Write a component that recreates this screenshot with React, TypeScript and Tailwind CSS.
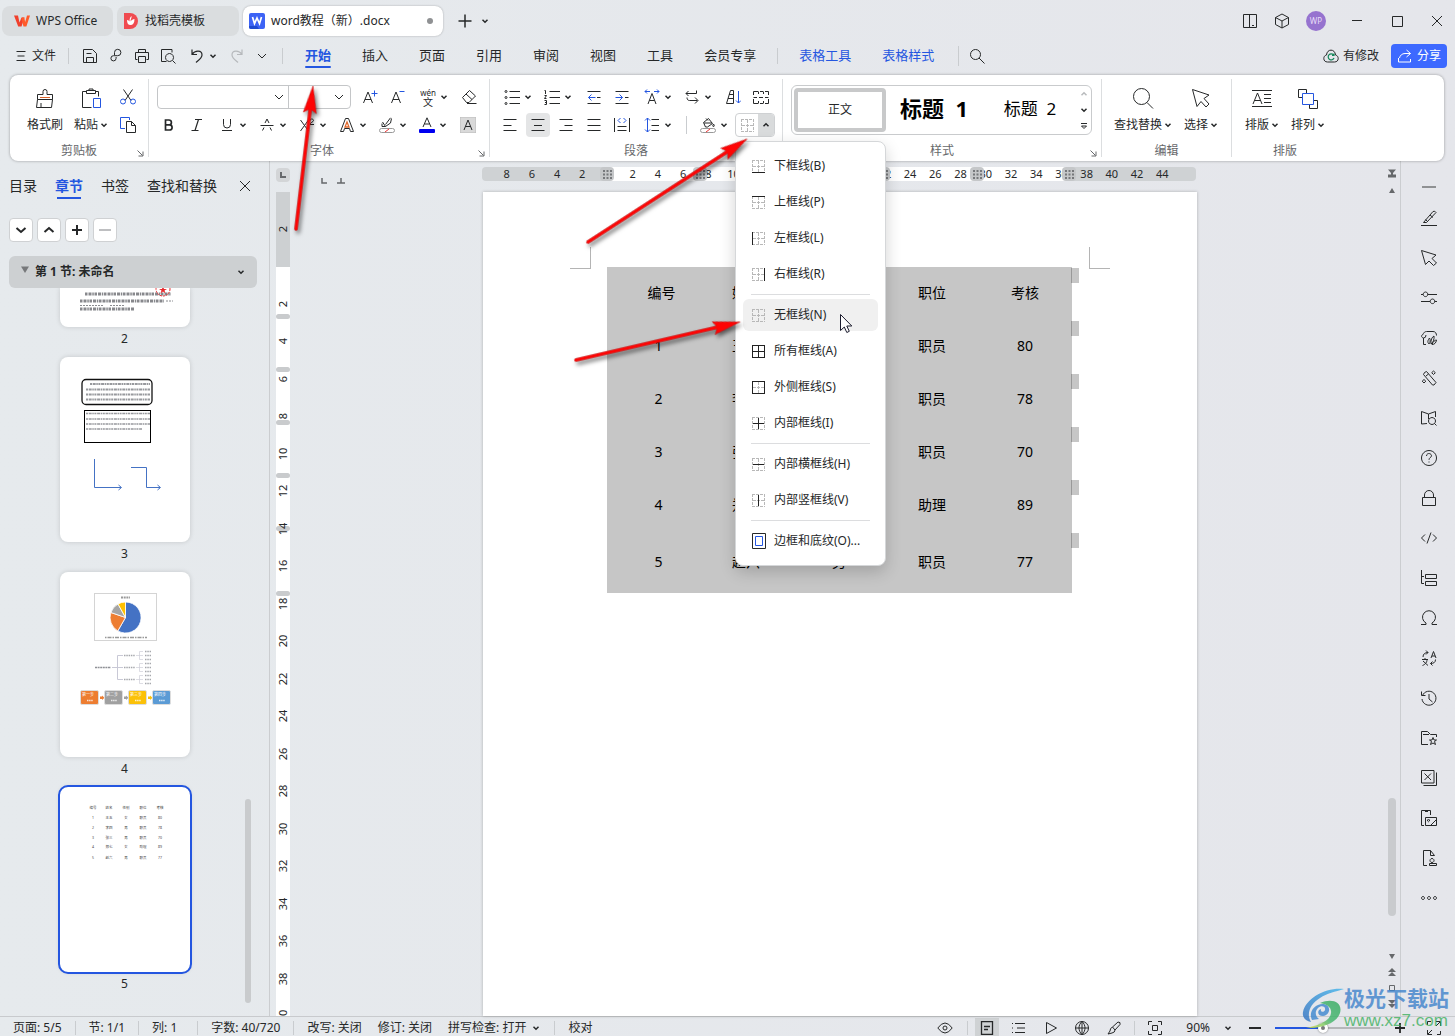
import { Fragment, type ReactNode } from 'react';
import clsx from 'clsx';

const FONT = "font-['Noto_Sans','Noto_Sans_CJK_SC',sans-serif]";

type IconProps = { w?: number; h?: number; className?: string; children: ReactNode };

function Icon({ w = 16, h = 16, className, children }: IconProps) {
  return (
    <svg
      width={w}
      height={h}
      viewBox={`0 0 ${w} ${h}`}
      fill="none"
      stroke="currentColor"
      className={clsx('shrink-0', className)}
      aria-hidden="true"
    >
      {children}
    </svg>
  );
}

const Caret = ({ up = false }: { up?: boolean }) => (
  <Icon w={8} h={8}>
    <path d={up ? 'M1.5 5.2 4 2.8l2.5 2.4' : 'M1.5 2.8 4 5.2l2.5-2.4'} strokeWidth="1.5" />
  </Icon>
);

const Chevron = ({ className }: { className?: string }) => (
  <Icon w={10} h={8} className={className}>
    <path d="M1 2l4 4 4-4" />
  </Icon>
);

const blue = '#2456e0';

/* ---------- 标题栏 ---------- */

function TitleBar() {
  return (
    <header className="flex h-10 items-end pb-1 pl-0.5 pr-2">
      <button className="flex h-[30px] w-[111px] items-center gap-1.5 rounded-lg bg-[#dadddf] pl-3">
        <Icon>
          <path d="M0 2.5h4l1.5 7 2-5h3l-3 9H4.2z" fill="#f0402c" stroke="none" />
          <path d="M8 4.5h2.2l1 4.5L13 2.5h3l-3.600 11H9.500L7.600 6z" fill="#ff5a2a" stroke="none" />
        </Icon>
        WPS Office
      </button>
      <button className="ml-1 flex h-[30px] w-[122px] items-center gap-1.5 rounded-lg bg-[#dadddf] pl-1.5">
        <Icon>
          <path d="M1 0h6a8 8 0 0 1 0 16H1z" fill="#f04b50" stroke="none" />
          <path d="M8.500 3c.5 2-1 3-1 5.500 1-1.500 2.500-2.500 4-2.500 0 4-1.500 6-4 6S4 10 4 7c1.500 0 2 .8 2.500 1.500C6.500 6 7 4 8.500 3z" fill="#fff" stroke="none" />
        </Icon>
        找稻壳模板
      </button>
      <button className="ml-1 flex h-[30px] w-[200px] items-center gap-1.5 rounded-lg bg-white pl-1.5 pr-2.5 shadow-[0_0_2px_rgba(0,0,0,0.3)]">
        <Icon>
          <rect width="16" height="16" rx="2" fill="#3d63f5" stroke="none" />
          <path d="M0 13h8l2 3H2a2 2 0 0 1-2-2z" fill="#1f49cf" stroke="none" />
          <path d="M3.500 4l2 6.500L8 5l2.500 5.500 2-6.500" stroke="#fff" strokeWidth="1.700" />
        </Icon>
        <span className="whitespace-nowrap">word教程（新）.docx</span>
        <span className="ml-auto h-1.5 w-1.5 rounded-full bg-[#8f9193]" />
      </button>
      <button aria-label="新建" className="ml-3.5 flex h-[30px] items-center">
        <Icon><path d="M8 1.500v13M1.500 8h13" strokeWidth="1.500" /></Icon>
      </button>
      <button aria-label="标签列表" className="ml-2 flex h-[30px] items-center"><Caret /></button>

      <div className="ml-auto flex h-[30px] items-center">
        <button aria-label="分屏" className="mr-4">
          <Icon><path d="M1.500 1.500h13v13h-13zM7.500 1.500v13M10 12.500h2" /></Icon>
        </button>
        <button aria-label="应用" className="mr-4">
          <Icon>
            <path d="M8 1l6.500 3.500v7L8 15l-6.500-3.500v-7zM1.500 4.500 8 8l6.500-3.500M8 8v7" />
          </Icon>
        </button>
        <button className="mr-[26px] h-5 w-5 rounded-full bg-[#9673cf] text-[8px] leading-5 text-[#e6dcf7]">WP</button>
        <button aria-label="最小化" className="mr-[30px]">
          <Icon w={10} h={10}><path d="M0 4.500h10" /></Icon>
        </button>
        <button aria-label="最大化" className="mr-7">
          <Icon w={11} h={11}><path d="M.5.5h10v10H.5z" /></Icon>
        </button>
        <button aria-label="关闭" className="mr-1">
          <Icon w={12} h={12}><path d="M1 1l10 10M11 1L1 11" /></Icon>
        </button>
      </div>
    </header>
  );
}

/* ---------- 菜单栏 ---------- */

const quickTools = [
  { label: '保存', d: 'M1.500 1.500h9l4 4v9h-13zM4.500 14v-4.500h7V14M4.500 5.500h5' },
  { label: '输出', d: 'M6.500 7V4.500a3.200 3.200 0 1 1 3.200 3.200H5.500a2.600 2.600 0 1 0 2.600 2.600V9' },
  { label: '打印', d: 'M4.500 4.500v-3h7v3M3.500 11.500h-2v-7h13v7h-2M4.500 8.500h7v6h-7z' },
  { label: '预览', d: 'M6.500 13.500h-5v-12h10.500v3M9.500 5.500a4 4 0 1 0 .01 0M12.500 12.500l3 3' },
];

const menuTabs = ['插入', '页面', '引用', '审阅', '视图', '工具', '会员专享'];

const Divider = ({ className }: { className?: string }) => (
  <span className={clsx('w-px bg-[#c9cccf]', className)} />
);

function MenuBar() {
  return (
    <nav className="flex h-[35px] items-center pb-1 pl-4 pr-2">
      <button className="flex items-center gap-1.5">
        <Icon w={10} h={12}><path d="M.5 1.500h9M1.500 6h7M.5 10.500h9" /></Icon>
        文件
      </button>
      <Divider className="ml-3 mr-2 h-4" />
      {quickTools.map(({ label, d }) => (
        <button key={label} aria-label={label} className="flex w-[26px] justify-center">
          <Icon><path d={d} /></Icon>
        </button>
      ))}
      <button aria-label="撤销" className="ml-2 flex items-center gap-1">
        <Icon><path d="M3 1.500v5h5M3 6.500C6 2 13 2 13 7c0 3-3 5-6 7.500" strokeWidth="1.200" /></Icon>
        <Caret />
      </button>
      <button aria-label="重做" className="ml-3 text-[#b6b9bc]">
        <Icon><path d="M13 1.500v5H8M13 6.500C10 2 3 2 3 7c0 3 3 5 6 7.500" strokeWidth="1.200" /></Icon>
      </button>
      <button aria-label="更多" className="ml-3"><Chevron /></button>
      <Divider className="ml-[15px] mr-[22px] h-4" />

      <div className="flex gap-[31px] text-[13px]">
        <a href="#start" className="relative font-bold text-[#2456e0]">
          开始
          <span className="absolute inset-x-0 -bottom-1 h-0.5 rounded bg-[#2456e0]" />
        </a>
        {menuTabs.map((tab) => (
          <a key={tab} href="#tab">{tab}</a>
        ))}
      </div>
      <Divider className="mx-[21px] h-4" />
      <div className="flex gap-[31px] text-[13px] text-[#2456e0]">
        <a href="#table-tools">表格工具</a>
        <a href="#table-style">表格样式</a>
      </div>
      <Divider className="ml-6 mr-[10px] h-5" />
      <button aria-label="搜索">
        <Icon><circle cx="6.500" cy="6.500" r="5" /><path d="M10 10l5.500 5.500" /></Icon>
      </button>

      <button className="ml-auto flex items-center gap-1">
        <Icon>
          <path d="M4.500 14C-.5 14 0 7.500 3.500 7 4 .5 12 .5 12.500 7c3.500.5 4 7-1 7z" />
          <path d="M10.500 7a3 3 0 1 0 .5 3M11 5.500v2H9" stroke="#14875a" strokeWidth="1.200" />
        </Icon>
        有修改
      </button>
      <button className="ml-3 flex h-6 w-14 items-center justify-center gap-1 rounded bg-[#3d69ff] text-white">
        <Icon>
          <path d="M9.500 2l4 3.500-4 3.500M13.500 5.500H8c-3 0-5 2-5.500 4.500M1.500 10v4h12v-3" />
        </Icon>
        分享
      </button>
    </nav>
  );
}

/* ---------- 功能区 ---------- */

function Group({ label, className, launcher, children }: {
  label: string;
  className?: string;
  launcher?: boolean;
  children: ReactNode;
}) {
  return (
    <section className={clsx('relative flex shrink-0 flex-col pt-2', className)}>
      <div className="flex h-14 flex-col">{children}</div>
      <div className="h-[22px] text-center leading-6 text-[#66686b]">{label}</div>
      {launcher && (
        <button aria-label={`${label}设置`} className="absolute bottom-1 right-1 text-[#66686b]">
          <Icon w={7} h={7}><path d="M.5.5l5 5M6 1.500v4.500H1.500" /></Icon>
        </button>
      )}
    </section>
  );
}

const GroupLine = () => <span className="my-1 w-px bg-[#dcdee0]" />;

const Tool = ({ label, children, drop, active }: {
  label: string;
  children: ReactNode;
  drop?: boolean;
  active?: boolean;
}) =>
  drop ? (
    <button aria-label={label} className="flex h-7 w-10 shrink-0 items-center gap-1 pl-2">
      {children}
      <Caret />
    </button>
  ) : (
    <button aria-label={label} className="flex h-7 w-7 shrink-0 items-center justify-center">
      <span className={clsx('flex h-6 w-6 items-center justify-center rounded', active && 'bg-[#e4e5e6]')}>
        {children}
      </span>
    </button>
  );

const BigTool = ({ label, drop, className, children }: {
  label: string;
  drop?: boolean;
  className: string;
  children: ReactNode;
}) => (
  <button className={clsx('flex h-14 flex-col items-center pt-1', className)}>
    {children}
    <span className="flex h-7 items-center gap-0.5 whitespace-nowrap">
      {label}
      {drop && <Caret />}
    </span>
  </button>
);

function ClipboardGroup() {
  return (
    <Group label="剪贴板" launcher className="w-[138px]">
      <div className="flex pl-3">
        <BigTool label="格式刷" className="w-[46px]">
          <Icon w={24} h={24}>
            <path d="M4.500 7.500h5.500v-3a2 2 0 0 1 4 0v3h5.500v5h-15zM4.500 12.500l-1 8h15l1-8M8 20v-4" />
            <path d="M7 10.500h10" stroke="#d9622b" />
          </Icon>
        </BigTool>
        <BigTool label="粘贴" drop className="w-[46px]">
          <Icon w={24} h={24}>
            <path d="M7 4.500H3.500v16h9M17 4.500h2.500v5M7.500 3.500h9v3h-9zM10 3.500V2h4v1.500" />
            <path d="M14.500 11.500h7v9h-7z" stroke={blue} />
          </Icon>
        </BigTool>
        <div className="flex flex-col">
          <Tool label="剪切">
            <Icon>
              <path d="M3.500.5l7.500 11M12.500.5L5 11.500" />
              <circle cx="3" cy="12.500" r="2.500" stroke={blue} />
              <circle cx="13" cy="12.500" r="2.500" stroke={blue} />
            </Icon>
          </Tool>
          <Tool label="复制">
            <Icon>
              <path d="M5 11.500H.5V.5h9V3" stroke={blue} />
              <path d="M6.500 4.500h5l4 4v7h-9zM11.500 4.500v4h4" />
            </Icon>
          </Tool>
        </div>
      </div>
    </Group>
  );
}

function FontGroup() {
  return (
    <Group label="字体" launcher className="w-[340px] pl-1.5">
      <div className="flex h-7 items-center">
        <div className="ml-0.5 mr-[5px] flex h-6 w-[194px] rounded border border-[#c4c6c8]">
          <label className="relative flex w-[131px] items-center border-r border-[#c4c6c8]">
            <select aria-label="字体名称" className="h-full w-full appearance-none bg-transparent"><option /></select>
            <Chevron className="absolute right-1" />
          </label>
          <label className="relative flex flex-1 items-center">
            <select aria-label="字号" className="h-full w-full appearance-none bg-transparent"><option /></select>
            <Chevron className="absolute right-1.5" />
          </label>
        </div>
        <Tool label="增大字号">
          <Icon>
            <path d="M1.500 14l4.500-11 4.500 11M3 10.500h6" />
            <path d="M9.500 4.500h6M12.500 1.500v6" stroke={blue} />
          </Icon>
        </Tool>
        <Tool label="减小字号">
          <Icon>
            <path d="M1.500 14l4.500-11 4.500 11M3 10.500h6" />
            <path d="M9.500 2.500h5" stroke={blue} />
          </Icon>
        </Tool>
        <Tool label="拼音指南" drop>
          <span className="flex w-4 flex-col items-center">
            <span className="text-[8px] leading-[9px]">wén</span>
            <span className="text-[10px] leading-[10px]">文</span>
          </span>
        </Tool>
        <span className="w-[3px]" />
        <Tool label="清除格式">
          <Icon><path d="M1.500 8.500l7-7 6 5.500-6.500 6.500h-2.500zM5 5l6 5.500M6 14.500h9.500" /></Icon>
        </Tool>
      </div>
      <div className="flex h-7 items-center">
        <Tool label="加粗"><Icon><path d="M4.500 3v10h4a2.500 2.500 0 0 0 0-5.200h-4 3.500a2.300 2.300 0 0 0 0-4.800z" strokeWidth="1.700" /></Icon></Tool>
        <Tool label="倾斜"><Icon><path d="M6 2.500h7M2.500 13.500h7M9.500 2.500l-3.500 11" strokeWidth="1.200" /></Icon></Tool>
        <Tool label="下划线" drop><Icon><path d="M4.500 2v5.500a3.500 3.500 0 0 0 7 0V2M3 13.500h10" /></Icon></Tool>
        <Tool label="删除线" drop><Icon><path d="M1.500 8.500h13M6 6l2-4 2 4M5 10.500l-1.500 3M11 10.500l1.500 3" /></Icon></Tool>
        <Tool label="上标" drop>
          <Icon><path d="M1.500 3l8 11M9.500 3l-8 11M11 3.500c0-2 3.500-2 3.500 0 0 1.500-3.500 2-3.500 4h4" /></Icon>
        </Tool>
        <Tool label="文字效果" drop>
          <Icon>
            <path d="M1.500 14.500l5-13h3l5 13h-3l-1-3h-5l-1 3z" />
            <path d="M6 10L8 5l2 5z" stroke="#e0682c" strokeWidth="1.300" />
          </Icon>
        </Tool>
        <Tool label="突出显示" drop>
          <Icon>
            <path d="M6.500 7.500L11.500.8M3.500 5l3 4.500 5-3.500 1-4.500M6.500 9.500H3v-3" />
            <rect x=".5" y="11.500" width="15" height="4" rx="2" stroke="#999" />
            <path d="M6 15l4-3" stroke="#e33" />
          </Icon>
        </Tool>
        <Tool label="字体颜色" drop>
          <Icon>
            <path d="M4 10L8 .8 12 10M5.500 7h5" />
            <rect y="12" width="16" height="4" rx="1" fill="#0000f0" stroke="none" />
          </Icon>
        </Tool>
        <span className="w-[3px]" />
        <Tool label="字符底纹">
          <Icon>
            <rect width="16" height="16" fill="#d9d9d9" stroke="#bbb" />
            <path d="M4 13L8 3l4 10M5.500 9.500h5" />
          </Icon>
        </Tool>
      </div>
    </Group>
  );
}

/* 边框图标：列出的边画实线，其余为虚线 */
const borderLines: Record<string, string> = {
  t: 'M0 .5h13',
  b: 'M0 12.500h13',
  l: 'M.5 0v13',
  r: 'M12.500 0v13',
  h: 'M1 6.500h11',
  v: 'M6.500 1v11',
};

function BorderIcon({ sides = '' }: { sides?: string }) {
  return (
    <Icon w={13} h={13}>
      {Object.entries(borderLines).map(([side, d]) =>
        sides.includes(side) ? null : <path key={side} d={d} stroke="#b8b8b8" strokeDasharray="3 1" />
      )}
      {Object.entries(borderLines).map(([side, d]) =>
        sides.includes(side) ? <path key={side} d={d} stroke="#222" /> : null
      )}
    </Icon>
  );
}

const borderMenu = [
  [
    { label: '下框线(B)', sides: 'b' },
    { label: '上框线(P)', sides: 't' },
    { label: '左框线(L)', sides: 'l' },
    { label: '右框线(R)', sides: 'r' },
  ],
  [
    { label: '无框线(N)', sides: '', active: true },
    { label: '所有框线(A)', sides: 'tblrhv' },
    { label: '外侧框线(S)', sides: 'tblr' },
    { label: '内部框线(I)', sides: 'hv' },
  ],
  [
    { label: '内部横框线(H)', sides: 'h' },
    { label: '内部竖框线(V)', sides: 'v' },
  ],
];

function BorderMenu() {
  return (
    <div className="absolute left-0 top-full z-30 mt-1 flex w-[151px] flex-col gap-1 rounded-lg border border-[#d5d7d9] bg-white px-[7px] pb-2 pt-2 shadow-[0_6px_16px_rgba(0,0,0,0.18)]">
      {borderMenu.map((section, i) => (
        <Fragment key={i}>
          {section.map(({ label, sides, active }: { label: string; sides: string; active?: boolean }) => (
            <button
              key={label}
              className={clsx('flex h-8 items-center gap-[9px] whitespace-nowrap rounded-md pl-[9px]', active && 'bg-[#f0f0f0]')}
            >
              <BorderIcon sides={sides} />
              {label}
            </button>
          ))}
          <hr className="mx-2 h-px border-0 bg-[#dcdddf]" />
        </Fragment>
      ))}
      <button className="flex h-8 items-center gap-2 whitespace-nowrap pl-[9px]">
        <Icon w={14} h={16}>
          <path d="M.5.5h13v15H.5z" />
          <path d="M3.500 3.500h7v9h-7z" stroke={blue} />
        </Icon>
        边框和底纹(O)...
      </button>
    </div>
  );
}

function ParagraphGroup() {
  return (
    <Group label="段落" className="w-[292px]">
      <div className="flex h-7 items-center pl-1.5">
        <Tool label="项目符号" drop>
          <Icon>
            <path d="M5.500 2.500H16M5.500 8.500H16M5.500 14.500H16" />
            <circle cx="2" cy="2.500" r="1" /><circle cx="2" cy="8.500" r="1" /><circle cx="2" cy="14.500" r="1" />
          </Icon>
        </Tool>
        <Tool label="编号" drop>
          <Icon>
            <path d="M5.500 2.500H16M5.500 8.500H16M5.500 14.500H16M.5 1.500h1V5M.5 6.500h2L.5 9.500h2M.5 11.500h2v4h-2M1 13.500h1" />
          </Icon>
        </Tool>
        <span className="w-1" />
        <Tool label="减少缩进">
          <Icon w={14} h={16}>
            <path d="M.5 2.500h13M10 8.500h3.500M.5 14.500h13" />
            <path d="M8.500 8.500h-7M4.500 5.500l-3 3 3 3" stroke={blue} />
          </Icon>
        </Tool>
        <Tool label="增加缩进">
          <Icon w={14} h={16}>
            <path d="M.5 2.500h13M10 8.500h3.500M.5 14.500h13" />
            <path d="M.5 8.500h7M4.500 5.500l3 3-3 3" stroke={blue} />
          </Icon>
        </Tool>
        <Tool label="中文版式" drop>
          <Icon>
            <path d="M4 15L8 4.500 12 15M5.500 11.500h5" />
            <path d="M6 2.500H1M3 .5l-2 2 2 2M10 2.500h5M13 .5l2 2-2 2" stroke={blue} />
          </Icon>
        </Tool>
        <Tool label="换行标记" drop>
          <Icon><path d="M12.500 1.500v3H2M4.500 2L2 4.500 4.500 7M3 8.500c0 2 1 3 2.500 3h8M11 8.500l3 3-3 3" /></Icon>
        </Tool>
        <span className="w-[3px]" />
        <Tool label="排序">
          <Icon>
            <path d="M1.500 14.500l4-13h3v13zM3 9.500h5.500M4 5.500h4.500" />
            <path d="M13.500 2v12M11 11.500l2.500 2.500 2.500-2.500" stroke={blue} />
          </Icon>
        </Tool>
        <Tool label="显示网格">
          <Icon><path d="M.5 6V2.500H5M7 2.500h3M12 2.500h3.500V6M.5 10v4.500H5M7 14.500h3M12 14.500h3.500V10M.5 8.500H4M6 8.500h4M12 8.500h3.500M5.500 2.500V5M10.500 2.500V5M5.500 12v2.500M10.500 12v2.500" /></Icon>
        </Tool>
      </div>
      <div className="flex h-7 items-center pl-1.5">
        <Tool label="左对齐"><Icon w={14} h={16}><path d="M.5 2.500h13M.5 8.500h8M.5 13.500h13" /></Icon></Tool>
        <Tool label="居中" active><Icon w={14} h={16}><path d="M.5 2.500h13M3 8.500h8M.5 13.500h13" /></Icon></Tool>
        <Tool label="右对齐"><Icon w={14} h={16}><path d="M.5 2.500h13M5.500 8.500h8M.5 13.500h13" /></Icon></Tool>
        <Tool label="两端对齐"><Icon w={14} h={16}><path d="M.5 2.500h13M.5 8.500h13M.5 13.500h13" /></Icon></Tool>
        <Tool label="分散对齐">
          <Icon>
            <path d="M.5 1v14M15.500 1v14M3.500 9.500h9M3.500 13.500h9" />
            <path d="M6.500 1l-2.500 2.500L6.500 6M9.500 1L12 3.500 9.500 6" stroke={blue} />
          </Icon>
        </Tool>
        <Tool label="行距" drop>
          <Icon>
            <path d="M7.500 2.500H15M7.500 8.500H15M7.500 13.500H15" />
            <path d="M3.500 1v14M1 3.500L3.500 1 6 3.500M1 12.500L3.500 15 6 12.500" stroke={blue} />
          </Icon>
        </Tool>
        <Divider className="ml-2.5 mr-[5px] h-[18px]" />
        <Tool label="底纹颜色" drop>
          <Icon>
            <path d="M3.500 5.500l5-4 4 5-5 3.500h-2zM4 6h8M6 1.500l2 2M13.500 7c1 1.500 1 2.500 0 2.500s-1-1 0-2.500" />
            <rect x=".5" y="11.500" width="15" height="4" rx="2" stroke="#999" />
            <path d="M6 15l4-3" stroke="#e33" />
          </Icon>
        </Tool>
        <div className="relative ml-[3px]">
          <div className="flex h-6 w-10 overflow-hidden rounded border border-[#cfd1d3]">
            <button aria-label="边框" className="flex flex-1 items-center justify-center"><BorderIcon /></button>
            <button aria-label="边框选项" className="flex w-4 items-center justify-center bg-[#d9dbdc]"><Caret up /></button>
          </div>
          <BorderMenu />
        </div>
      </div>
    </Group>
  );
}

function StyleGroup() {
  return (
    <Group label="样式" launcher className="w-[318px]">
      <div className="ml-2 mt-0.5 flex h-[50px] w-[301px] items-center rounded-md border border-[#c9cbcd] pl-0.5">
        <button className="h-11 w-[92px] rounded border-4 border-[#c8c9ca]">正文</button>
        <button className="w-24 whitespace-pre pb-1 text-[22px] font-bold leading-none text-black">标题  1</button>
        <button className="w-24 whitespace-pre pb-1 text-[17px] leading-none text-black">标题  2</button>
        <div className="flex h-full w-3 flex-col items-center justify-around">
          <button aria-label="上一行" className="text-[#b9bbbd]"><Caret up /></button>
          <button aria-label="下一行"><Caret /></button>
          <button aria-label="更多样式">
            <Icon w={8} h={8}><path d="M1 1.500h6" /><path d="M1.500 4l2.500 2.500L6.500 4z" /></Icon>
          </button>
        </div>
      </div>
    </Group>
  );
}

function Ribbon() {
  return (
    <div className="relative z-20 ml-2.5 mr-[11px] flex h-[86px] rounded-lg bg-white shadow-[0_0_3px_rgba(0,0,0,0.35)]">
      <ClipboardGroup />
      <GroupLine />
      <FontGroup />
      <GroupLine />
      <ParagraphGroup />
      <GroupLine />
      <StyleGroup />
      <GroupLine />
      <Group label="编辑" className="w-[129px]">
        <div className="flex gap-2 pl-[11px]">
          <BigTool label="查找替换" drop className="w-[60px]">
            <Icon w={24} h={24}><circle cx="10.500" cy="9.500" r="8" /><path d="M16 15.500l6 6" /></Icon>
          </BigTool>
          <BigTool label="选择" drop className="w-10">
            <Icon w={24} h={24}><path d="M3.500 2.500l4.500 17 4-5 5 5.500 3-3-5-5.500 5-3.500z" /></Icon>
          </BigTool>
        </div>
      </Group>
      <GroupLine />
      <Group label="排版" className="w-[106px]">
        <div className="flex pl-[7px]">
          <BigTool label="排版" drop className="w-[46px]">
            <Icon w={24} h={24}><path d="M2 3.500h20M2 19.500h20M3 17L7.500 6 12 17M4.500 13.500h6M14 7.500h7M14 11.500h7M14 15.500h7" /></Icon>
          </BigTool>
          <BigTool label="排列" drop className="w-[46px]">
            <Icon w={24} h={24}>
              <path d="M7 10.500H2.500v-8h8V6M17 13.500h4.500v8h-8V18" />
              <path d="M6.500 6.500h11v11h-11z" stroke={blue} />
            </Icon>
          </BigTool>
        </div>
      </Group>
    </div>
  );
}

/* ---------- 左侧章节面板 ---------- */

const header = ['编号', '姓名', '性别', '职位', '考核'];
const rows = [
  ['1', '王五', '女', '职员', '80'],
  ['2', '李四', '男', '职员', '78'],
  ['3', '张三', '男', '职员', '70'],
  ['4', '郑七', '女', '助理', '89'],
  ['5', '赵六', '男', '职员', '77'],
];

const thumbCls = 'block w-[130px] shrink-0 bg-white shadow-[0_0_5px_rgba(0,0,0,0.15)]';

function ThumbTwo() {
  return (
    <svg viewBox="0 0 130 39" className={clsx(thumbCls, 'h-[39px] rounded-b-lg')} aria-hidden="true">
      <g stroke="#55575c" strokeWidth="3" fill="none" strokeDasharray="2.500 1 3 .8 1.500 .7" opacity=".7">
        <path d="M25 6h86" />
        <path d="M20 13h84" />
        <path d="M20 21h54" />
      </g>
      <path d="M20 17.500h24M50 17.500h14M106 13h7" stroke="#8a8c90" strokeDasharray="2 1" />
      <circle cx="103" cy="1" r="7" fill="none" stroke="#e8292d" strokeDasharray="2 1" />
      <path d="M103-2l1 3h3l-2.500 1.500 1 3-2.500-2-2.500 2 1-3L99 1h3z" fill="#e8292d" />
    </svg>
  );
}

function ThumbThree() {
  return (
    <svg viewBox="0 0 130 185" className={clsx(thumbCls, 'h-[185px] rounded-lg')} fill="none" aria-hidden="true">
      <rect x="22" y="22.500" width="70" height="25" rx="4" stroke="#111" strokeWidth="1.300" />
      <g stroke="#6c6e74" strokeWidth="2" strokeDasharray="2 .7 3 .6 1.500 .6" opacity=".7">
        <path d="M30 27h60M26 32.500h64M26 37.500h64M26 42.500h64" />
        <path d="M26 56.500h64M26 62h64M26 67h64M26 72h56" strokeWidth="1.300" />
      </g>
      <rect x="24.500" y="53.500" width="66" height="32" stroke="#000" />
      <g stroke="#4472c4">
        <path d="M34.500 102v28.500H61M58.500 128l3 2.500-3 2.500" />
        <path d="M71 110.500h15.500v20H100M97.500 128l3 2.500-3 2.500" />
      </g>
    </svg>
  );
}

const steps = [
  { x: 21, fill: '#ed7d31', label: '第一步' },
  { x: 45, fill: '#a0a0a0', label: '第二步' },
  { x: 69, fill: '#fbc108', label: '第三步' },
  { x: 93, fill: '#5b9bd5', label: '第四步' },
];

function ThumbFour() {
  return (
    <svg viewBox="0 0 130 185" className={clsx(thumbCls, 'h-[185px] rounded-lg')} fill="none" aria-hidden="true">
      <rect x="34.500" y="21.500" width="62" height="47" stroke="#d4d4d4" />
      <path d="M61 25.500h9" stroke="#999" strokeWidth="2" strokeDasharray="2 .7" />
      <g stroke="#fff" strokeWidth=".8">
        <path d="M65.500 45.500V30a15.500 15.500 0 1 1-7.700 28.900z" fill="#4472c4" />
        <path d="M65.500 45.500l-7.700 13.400A15.500 15.500 0 0 1 50.900 40.500z" fill="#ed7d31" />
        <path d="M65.500 45.500l-14.600-5A15.500 15.500 0 0 1 58 32z" fill="#a5a5a5" />
        <path d="M65.500 45.500L58 32a15.500 15.500 0 0 1 7.500-2z" fill="#ffc000" />
      </g>
      <path d="M45 65.500h42" stroke="#999" strokeWidth="1.500" strokeDasharray="1.500 1 4 1" />
      <path d="M52 95.500h11M57.500 83.500v24M57.500 83.500H63M57.500 107.500H63" stroke="#c9c9d6" />
      {[83.500, 95.500, 107.500].map((y) => (
        <g key={y}>
          <path d={`M64 ${y}h11M85 ${y - 4}h6M85 ${y}h6M85 ${y + 4}h6`} stroke="#a6a8ad" strokeWidth="1.300" strokeDasharray="1.500 .8" />
          <path d={`M76 ${y}h7M83 ${y - 4}h-3.500v8H83`} stroke="#cfcfd8" strokeWidth=".7" />
        </g>
      ))}
      <path d="M35 95.500h16" stroke="#8f9196" strokeWidth="1.300" strokeDasharray="2 .6" />
      {steps.map(({ x, fill, label }, i) => (
        <g key={label}>
          <rect x={x - 0.5} y="118.500" width="18" height="14" rx="1.500" fill={fill} stroke="#ddd" />
          <text x={x + 1} y="124" fontSize="4" fill="#fff">{label}</text>
          <path d={`M${x + 6} 128.500h6`} stroke="#fff" strokeWidth="1.300" strokeDasharray="1.500 .6" opacity=".8" />
          {i < 3 && <path d={`M${x + 19} 124.500h2v-1l2.500 2.300-2.500 2.300v-1h-2z`} fill={fill} />}
        </g>
      ))}
    </svg>
  );
}

function ThumbFive() {
  const cols = [33, 49, 66, 83, 100];
  const tops = [22, 32, 42, 52, 61, 72];
  return (
    <svg
      viewBox="0 0 130 185"
      className={clsx(thumbCls, 'h-[185px] rounded-lg outline-2 outline-[#2456e0]')}
      fontSize="3.500"
      fill="#444"
      textAnchor="middle"
      aria-hidden="true"
    >
      {[header, ...rows].map((row, r) =>
        row.map((cell, c) => (
          <text key={`${r}-${c}`} x={cols[c]} y={tops[r]}>{cell}</text>
        ))
      )}
    </svg>
  );
}

const paneTools = [
  { label: '展开', d: 'M1.500 4l4.500 4 4.500-4' },
  { label: '收起', d: 'M1.500 8l4.500-4 4.500 4' },
  { label: '新增节', d: 'M6 1v10M1 6h10' },
  { label: '删除节', d: 'M0 6h12', muted: true },
];

function SectionPane() {
  const thumbs = [
    { page: 2, node: <ThumbTwo /> },
    { page: 3, node: <ThumbThree /> },
    { page: 4, node: <ThumbFour /> },
    { page: 5, node: <ThumbFive /> },
  ];

  return (
    <aside className="relative flex w-[270px] shrink-0 flex-col border-r border-[#cbcdd0] pl-[9px]">
      <div className="flex h-[50px] items-center gap-[18px] text-sm">
        <a href="#toc">目录</a>
        <a href="#sections" className="relative font-bold text-[#2456e0]">
          章节
          <span className="absolute inset-x-0.5 -bottom-[3px] h-0.5 bg-[#2456e0]" />
        </a>
        <a href="#bookmarks">书签</a>
        <a href="#find">查找和替换</a>
        <button aria-label="关闭面板" className="ml-1">
          <Icon w={12} h={12}><path d="M1 1l10 10M11 1L1 11" /></Icon>
        </button>
      </div>
      <div className="mt-[7px] flex gap-1">
        {paneTools.map(({ label, d, muted }) => (
          <button
            key={label}
            aria-label={label}
            className="flex h-6 w-6 items-center justify-center rounded border border-[#cfd1d3] bg-white"
          >
            <Icon w={12} h={12} className={clsx(muted && 'text-[#a8aaac]')}>
              <path d={d} strokeWidth={muted ? 1.5 : 2} />
            </Icon>
          </button>
        ))}
      </div>
      <button className="mr-3 mt-3.5 flex h-8 shrink-0 items-center rounded-md bg-[#cdd0d2] px-3 text-[12px] font-bold">
        <Icon w={8} h={8} className="mb-1 mr-1.5"><path d="M0 .5h8L4 7z" fill="#76787a" stroke="none" /></Icon>
        第 1 节: 未命名
        <span className="ml-auto"><Caret /></span>
      </button>
      <div className="flex min-h-0 flex-1 flex-col items-center overflow-hidden pr-[29px]">
        {thumbs.map(({ page, node }) => (
          <Fragment key={page}>
            {node}
            <span className="h-[30px] shrink-0 pt-1 leading-4">{page}</span>
          </Fragment>
        ))}
      </div>
      <span className="absolute bottom-[13px] right-[18px] h-[204px] w-1.5 rounded-full bg-[#c9cbcd]" />
    </aside>
  );
}

/* ---------- 编辑区 ---------- */

const hLabels = ['8', '6', '4', '2', '', ...Array.from({ length: 22 }, (_, i) => String((i + 1) * 2))];

const ColumnMark = ({ className }: { className: string }) => (
  <span className={clsx('absolute top-0 flex h-3.5 w-3.5 items-center justify-center rounded bg-[#c5c7c9]', className)}>
    <Icon w={9} h={9} className="text-[#76787b]">
      <path d="M0 1h9M0 4.500h9M0 8h9" strokeWidth="2" strokeDasharray="2 1.500" />
    </Icon>
  </span>
);

function HorizontalRuler() {
  return (
    <div className="relative flex h-3.5 w-[714px] shrink-0 overflow-hidden rounded bg-[#cfd2d4] pl-3 pr-[21px] text-[11px] leading-[14px]">
      <span className="absolute left-[125px] top-0 h-full w-[462px] bg-white" />
      {hLabels.map((n, i) => (
        <span key={i} className="relative flex-1 text-center">{n}</span>
      ))}
      <ColumnMark className="left-[118px]" />
      <ColumnMark className="left-[211px]" />
      <ColumnMark className="left-[304px]" />
      <ColumnMark className="left-[394px]" />
      <ColumnMark className="left-[488px]" />
      <ColumnMark className="left-[580px]" />
    </div>
  );
}

const vPairs = [['2', ''], ...Array.from({ length: 10 }, (_, i) => [String(i * 4 + 2), String(i * 4 + 4)])];

function VerticalRuler() {
  return (
    <div className="w-[27px] shrink-0 overflow-hidden pl-1.5">
      <div className="mt-[7px] flex h-3.5 w-3.5 items-center justify-center rounded bg-[#d3d5d7] text-[#66686b]">
        <Icon w={6} h={6}><path d="M1 0v5h5" strokeWidth="2" /></Icon>
      </div>
      <div className="relative mt-[10px] w-3.5 bg-white">
        <span className="absolute inset-x-0 top-0 h-[75px] bg-[#cdd0d2]" />
        <span className="absolute inset-x-0 top-[122px] flex flex-col gap-12">
          {[0, 1, 2, 3, 4].map((i) => <span key={i} className="h-[5px] rounded-full bg-[#c9cbcd]" />)}
          <span className="mt-3 h-[5px] rounded-full bg-[#c9cbcd]" />
        </span>
        <div className="relative pt-[18px] text-[11px]">
          {vPairs.map((pair, i) => (
            <div key={i} className="flex h-[75px] flex-col">
              {pair.map((n, j) => (
                <span key={j} className="flex flex-1 items-center justify-center">
                  <span className="-rotate-90 leading-[14px]">{n}</span>
                </span>
              ))}
            </div>
          ))}
        </div>
      </div>
    </div>
  );
}

function DocTable() {
  return (
    <table className="w-[465px] table-fixed border-collapse bg-[#c6c6c6] text-center text-sm text-black">
      <tbody>
        {[header, ...rows].map((row, r) => (
          <tr key={r} className={r === 5 ? 'h-[61px]' : 'h-[53px]'}>
            {row.map((cell, c) => (
              <td key={c} className={clsx('relative p-0 pb-px', c === 0 ? (r === 0 ? 'pl-4' : 'pl-2.5') : 'pr-px')}>
                {cell}
                {c === 4 && <span className="absolute -right-[7px] top-px h-[15px] w-2 border-l border-[#999] bg-[#c6c6c6]" />}
              </td>
            ))}
          </tr>
        ))}
      </tbody>
    </table>
  );
}

function Editor() {
  return (
    <main className="flex min-w-0 flex-1">
      <VerticalRuler />
      <div className="flex min-w-0 flex-1 flex-col">
        <div className="flex h-[31px] shrink-0 items-center pb-[5px]">
          <div className="flex flex-1 gap-2.5 pl-6 pt-3.5 text-[#66686b]">
            <Icon w={6} h={6}><path d="M1 0v5h5" strokeWidth="1.500" /></Icon>
            <Icon w={8} h={6}><path d="M4 0v5M0 5h8" strokeWidth="1.500" /></Icon>
          </div>
          <HorizontalRuler />
          <div className="flex-1 pr-[26px]" />
        </div>
        <article className="relative mx-auto w-[714px] flex-1 bg-white px-[124px] pt-[75px] shadow-[0_0_3px_rgba(0,0,0,0.25)]">
          <span className="absolute left-[87px] top-[55px] h-[22px] w-[21px] border-b border-r border-[#b4b4b4]" />
          <span className="absolute right-[87px] top-[55px] h-[22px] w-[21px] border-b border-l border-[#b4b4b4]" />
          <DocTable />
        </article>
      </div>
      <div className="flex w-[17px] shrink-0 flex-col items-center text-[#66686b]">
        <Icon w={8} h={9} className="mt-2">
          <path d="M0 .5h8L5 4v1.500h3v3H0v-3h3V4z" fill="currentColor" stroke="none" />
        </Icon>
        <Icon w={6} h={5} className="mt-2.5"><path d="M0 5l3-5 3 5z" fill="currentColor" stroke="none" /></Icon>
        <span className="mb-[38px] mt-auto h-[118px] w-2 rounded-full bg-[#c9cbce]" />
        <Icon w={6} h={5}><path d="M0 0l3 5 3-5z" fill="currentColor" stroke="none" /></Icon>
        <Icon w={8} h={8} className="mt-[9px]"><path d="M0 4l4-4 4 4zM0 8l4-4 4 4z" fill="currentColor" stroke="none" /></Icon>
        <Icon w={6} h={6} className="mt-[9px]"><path d="M.5.5h5v5h-5z" /></Icon>
        <Icon w={8} h={8} className="mb-2 mt-[9px]"><path d="M0 0l4 4 4-4zM0 4l4 4 4-4z" fill="currentColor" stroke="none" /></Icon>
      </div>
    </main>
  );
}

/* ---------- 右侧工具栏 ---------- */

const sideTools = [
  { label: '编辑', d: 'M2.500 12.500L12 1.500q2-1 3 1L5.500 12.500zM9 5l3 2.500M4.500 9.500l2 2M0 15.500h16' },
  { label: '选择', d: 'M.5.5l4 14 3.500-3.500 4.500 4.500 3-2.500L11 8.500l4-3.500z' },
  { label: '属性', d: 'M0 4.500h2M6.500 4.500H16M4.500 2a2.300 2.300 0 1 0 .01 0M0 11.500h9M13.500 11.500H16M11.500 9a2.300 2.300 0 1 0 .01 0' },
  { label: '素材', d: 'M5 14.500H2.500V8C0 7.500 0 5 2 4.500 3 1.500 5 1.500 6 1.500h6c2.500 0 3.500 2 3.500 4M2.500 8q2.500 0 2.500-3M8 14c-2-2-1-4 .5-6 1 2 1 4-.5 6zM10 14c-.5-4 1-7 3-8 .5 3-1 7-3 8zM11 14.500c1-3 3-4.500 4.500-4.500-.5 3-2 4.500-4.500 4.500z' },
  { label: '美化', d: 'M3.500 2.500l2-1 9.500 11-2 2.500h-1.500L2.500 4.500zM5 6l2.500-2M12.500 1l1.800 1.700-1.800 1.800-1.800-1.800zM3 9.500l1.800 1.700L3 13l-1.800-1.800z' },
  { label: '查阅', d: 'M6 13.500L.5 14V1.500l7 2.500 7-2.500V7M7.500 4v5M11 7.500a3.500 3.500 0 1 0 .01 0M13.500 13.500l2 2' },
  { label: '帮助', d: 'M8 .5a7.500 7.500 0 1 0 .01 0M5.500 6c0-3.500 5-3 5-.2C10.500 7.500 8 7.500 8 9.800M8 11.500v1' },
  { label: '限制编辑', d: 'M1.500 7.500h13v8h-13zM3.500 7V5a4.500 4.500 0 0 1 9 0v2' },
  { label: '代码', d: 'M4 4.500L.5 8 4 11.500M12 4.500L15.500 8 12 11.500M10 2.500l-4 11' },
  { label: '结构', d: 'M.5 0v13.500H3M.5 6.500H3M4.500 4.500h11v4h-11zM4.500 11.500h11v4h-11z' },
  { label: '符号', d: 'M0 14.500h5V13A6.500 6.500 0 1 1 11 13v1.500h5' },
  { label: '翻译', d: 'M2 7c0-3 2-4.500 5-4.500M5 .5l2 2-2 2M14.500 9.500c0 3-2 4-5 4M11.500 11.500l-2 2 2 2M10 8l2.500-6.500L15 8M11 6h3M1 9.500h6M4 8v1.500M1.500 15.500C5 14 6 12 6 9.500M2 11l5 4.500' },
  { label: '历史', d: 'M1.500 5.500A7 7 0 1 1 1 9M.5 1.500v4h4M8 4v5l3.500 3' },
  { label: '资料夹', d: 'M7 14.500H.5v-13h6l3 3h6V7M2 4.500h6M12 7.500l1 2.500h2.500l-2 1.500 1 3-2.500-1.500-2.500 1.500 1-3-2-1.500H11z' },
  { label: '表格', d: 'M.5.5h12.500V13H.5zM3.500 3.500l6.500 6.500M10 3.500L3.500 10M15.500 2.500v13H2.500' },
  { label: '图片', d: 'M3 15.500H.5v-15h9V5M4 1.500h3M4.500 7.500h11v8h-11zM7.500 9.500a1 1 0 1 0 .01 0M10 15l5-5' },
  { label: '身份', d: 'M6 15.500H2.500v-15h7l4 5M9.500.5v5h4M11 8.500a2 2 0 1 0 .01 0M8.500 15.500v-2h7v2z' },
  { label: '更多', d: 'M2 6.500a1.500 1.500 0 1 0 .01 0M8 6.500a1.500 1.500 0 1 0 .01 0M14 6.500a1.500 1.500 0 1 0 .01 0' },
];

function SideBar() {
  return (
    <aside className="flex w-[55px] shrink-0 flex-col items-center border-l border-[#cbcdd0] pl-0.5">
      <button aria-label="折叠" className="mt-[17px] flex h-5 shrink-0 items-start pt-2 text-[#8f9193]">
        <Icon w={14} h={2}><path d="M0 1h14" strokeWidth="2" /></Icon>
      </button>
      {sideTools.map(({ label, d }) => (
        <button key={label} aria-label={label} className="flex h-10 shrink-0 items-center">
          <Icon><path d={d} /></Icon>
        </button>
      ))}
    </aside>
  );
}

/* ---------- 状态栏 ---------- */

function StatusBar() {
  return (
    <footer className="flex h-5 shrink-0 items-center whitespace-nowrap border-t border-[#c8cacd] pl-[13px] pr-3.5 pt-0.5">
      <span>页面: 5/5</span>
      <Divider className="mx-[13px] h-3.5" />
      <span>节: 1/1</span>
      <Divider className="mx-[13px] h-3.5" />
      <span>列: 1</span>
      <Divider className="ml-5 mr-[13px] h-3.5" />
      <span>字数: 40/720</span>
      <Divider className="mx-[13px] h-3.5" />
      <button>改写: 关闭</button>
      <button className="ml-4">修订: 关闭</button>
      <button className="ml-4 flex items-center gap-1.5">拼写检查: 打开<Caret /></button>
      <Divider className="ml-3.5 mr-[13px] h-3.5" />
      <button>校对</button>

      <div className="ml-auto flex items-center">
        <button aria-label="护眼模式">
          <Icon><path d="M.8 8Q8-2 15.200 8 8 18 .8 8z" /><circle cx="8" cy="8" r="2" /></Icon>
        </button>
        <Divider className="ml-3.5 mr-[7px] h-3.5" />
        <button aria-label="页面视图" className="flex h-5 w-6 items-center justify-center bg-[#cfd2d4]">
          <Icon w={14} h={14}><path d="M1.500.5h11v13h-11zM4 5.500h6M4 8.500h4" strokeWidth="1.300" /></Icon>
        </button>
        <button aria-label="大纲" className="ml-3">
          <Icon w={14} h={14}><path d="M4 2.500h10M6 7h8M4 11.500h10M1 2.500h1M1 7h1M1 11.500h1" /></Icon>
        </button>
        <button aria-label="阅读版式" className="ml-[19px]">
          <Icon w={14} h={14}><path d="M2.500 1.500L12.500 7l-10 5.500z" /></Icon>
        </button>
        <button aria-label="网页版式" className="ml-[17px]">
          <Icon w={14} h={14}><circle cx="7" cy="7" r="6.500" /><path d="M.5 7h13M7 .5v13M7 .5C3 4 3 10 7 13.500 11 10 11 4 7 .5" /></Icon>
        </button>
        <button aria-label="写作模式" className="ml-[18px]">
          <Icon w={14} h={14}><path d="M5.500 6L11 1q3 0 2 2.500L8 9zM5.500 6Q3 7 3 10L1 13l4-1q3-.5 3-3" /></Icon>
        </button>
        <Divider className="mx-[13px] h-3.5" />
        <button aria-label="适应页面">
          <Icon w={14} h={14}><path d="M4 .5H.5V4M10 .5h3.500V4M4 13.500H.5V10M10 13.500h3.500V10M4.500 4.500h5v5h-5z" /></Icon>
        </button>
        <button className="ml-6 flex items-center gap-3.5">90%<Caret /></button>
        <button aria-label="缩小" className="ml-[17px]">
          <Icon w={12} h={12}><path d="M0 6h12" strokeWidth="2" /></Icon>
        </button>
        <input
          type="range"
          aria-label="缩放"
          defaultValue={45}
          className="mx-3.5 h-0.5 w-[105px] appearance-none bg-linear-to-r from-[#2456e0] from-45% to-[#b5b7b9] to-45% [&::-webkit-slider-thumb]:h-2.5 [&::-webkit-slider-thumb]:w-2.5 [&::-webkit-slider-thumb]:appearance-none [&::-webkit-slider-thumb]:rounded-full [&::-webkit-slider-thumb]:border-[3px] [&::-webkit-slider-thumb]:border-white [&::-webkit-slider-thumb]:bg-[#76787a] [&::-webkit-slider-thumb]:shadow-[0_0_2px_rgba(0,0,0,0.5)]"
        />
        <button aria-label="放大">
          <Icon w={12} h={12}><path d="M1 6h10M6 1v10" strokeWidth="1.800" /></Icon>
        </button>
        <button aria-label="全屏" className="ml-[21px]">
          <Icon w={14} h={14}><path d="M9 .5h4.500V5M13 1L9 5M5 13.500H.5V9M1 13l4-4M.5 4V.5H4M13.500 10v3.500H10" /></Icon>
        </button>
      </div>
    </footer>
  );
}

/* ---------- 标注与水印 ---------- */

function Arrow({ from, to }: { from: [number, number]; to: [number, number] }) {
  const dx = to[0] - from[0];
  const dy = to[1] - from[1];
  const len = Math.hypot(dx, dy);
  const angle = (Math.atan2(dy, dx) * 180) / Math.PI;
  return (
    <g transform={`translate(${from[0]} ${from[1]}) rotate(${angle})`}>
      <path
        d={`M0-1.500H${len - 24}L${len - 27}-6.500 ${len} 0 ${len - 27} 6.500 ${len - 24} 1.500H0a1.500 1.500 0 0 1 0-3z`}
        fill="#fe0404"
        stroke="#c01010"
        strokeWidth=".5"
      />
    </g>
  );
}

function Annotations() {
  return (
    <svg className="pointer-events-none absolute inset-0 z-40 h-full w-full" aria-hidden="true">
      <g className="drop-shadow-[2px_3px_2px_rgba(0,0,0,0.55)]">
        <Arrow from={[296, 229]} to={[313, 86]} />
        <Arrow from={[588, 242]} to={[747, 139]} />
        <Arrow from={[576, 360]} to={[740, 322]} />
      </g>
      <path d="M840.500 314.500v16l3.800-3.500 2.500 5.500 2.500-1.200-2.500-5.300h5z" fill="#fff" stroke="#1c1c2e" />
    </svg>
  );
}

function Watermark() {
  return (
    <div className="pointer-events-none absolute bottom-[5px] right-1.5 z-50 flex items-center font-['Liberation_Sans','Noto_Sans_CJK_SC',sans-serif] opacity-80">
      <svg width="42" height="42" viewBox="0 0 42 42" aria-hidden="true">
        <defs>
          <linearGradient id="wave-blue" x1="0" y1="1" x2="1" y2="0">
            <stop offset="0" stopColor="#2f6fc0" />
            <stop offset="1" stopColor="#3fb4ec" />
          </linearGradient>
          <linearGradient id="wave-green" x1="0" y1="1" x2="1" y2="0">
            <stop offset="0" stopColor="#e6e34a" />
            <stop offset=".5" stopColor="#3fb56a" />
            <stop offset="1" stopColor="#2fa85c" />
          </linearGradient>
        </defs>
        <path d="M42 1C24-1 4 10 1 24c-1 6 3 9 8 10C4 26 8 16 18 10 25 5 33 4 42 1z" fill="url(#wave-blue)" />
        <path d="M10 32c-4-8 3-17 12-16 7 1 7 11-1 12-6 0-6-6-2-7-1 3 3 4 4 1 1-4-4-5-7-2-4 4-2 9 1 11z" fill="#3c86cf" />
        <path d="M18 15c12-5 23-1 20 10-3 10-19 16-34 15 10-2 24-6 25-15 1-6-5-9-11-10z" fill="url(#wave-green)" />
      </svg>
      <div className="flex flex-col">
        <span className="text-[21px] font-bold leading-6 text-[#3f83cb]">极光下载站</span>
        <span className="text-[17px] leading-5 text-[#3fb160]">www.xz7.com</span>
      </div>
    </div>
  );
}

export default function App() {
  return (
    <div className={clsx('relative flex h-screen flex-col overflow-hidden bg-linear-to-r from-[#e6eaed] to-[#e5e6eb] text-xs text-[#262829]', FONT)}>
      <TitleBar />
      <MenuBar />
      <Ribbon />
      <div className="flex min-h-0 flex-1">
        <SectionPane />
        <Editor />
        <SideBar />
      </div>
      <StatusBar />
      <Annotations />
      <Watermark />
    </div>
  );
}
